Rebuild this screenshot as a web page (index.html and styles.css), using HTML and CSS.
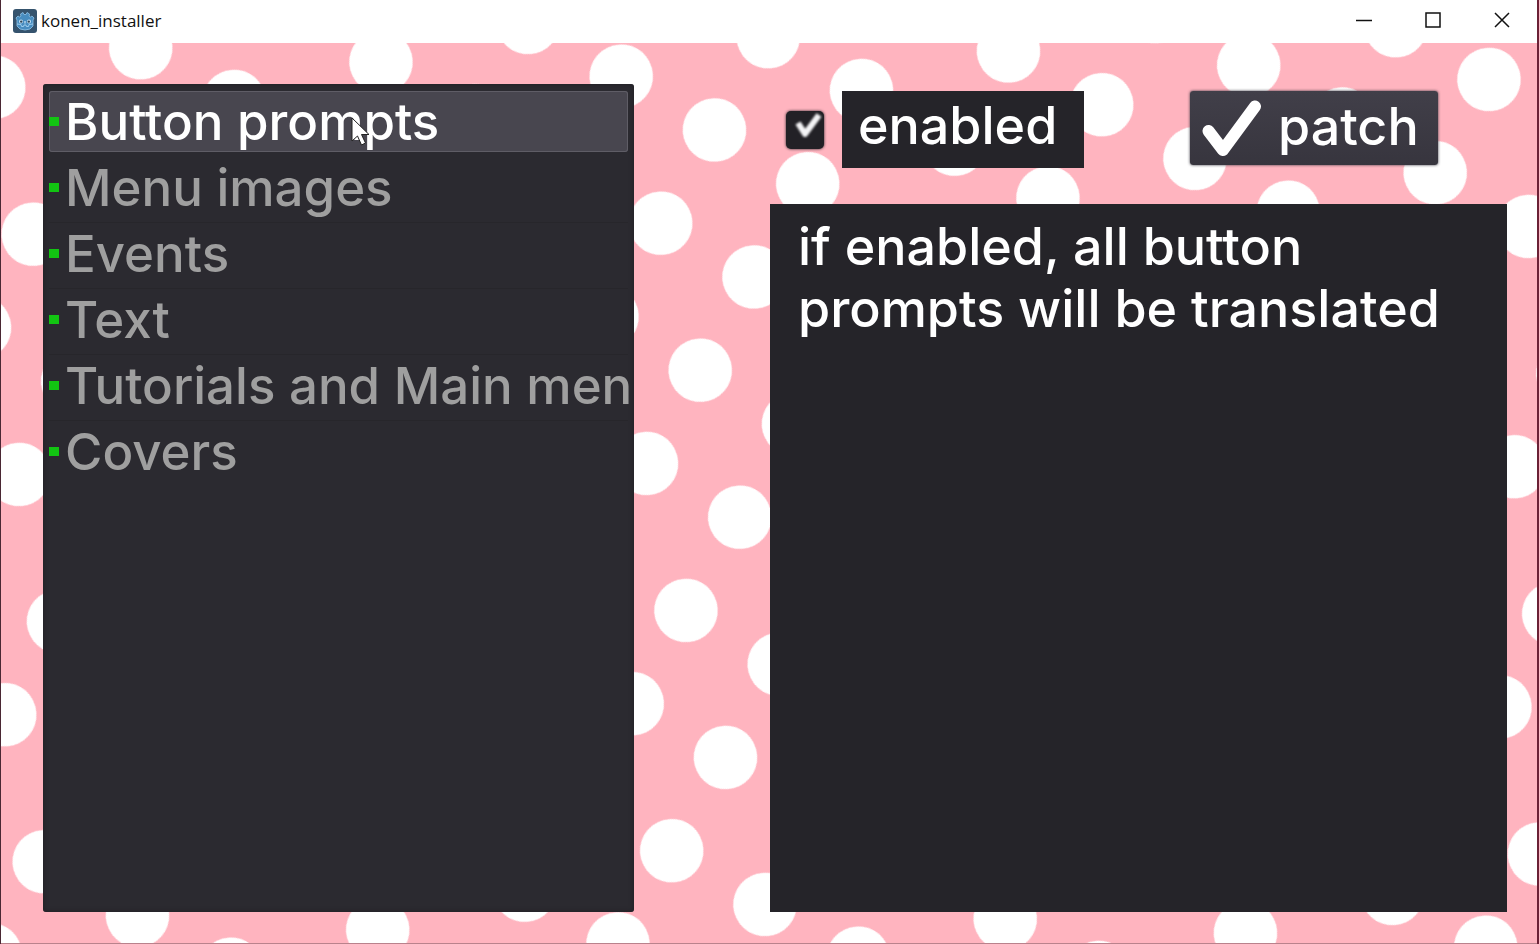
FILE: index.html
```html
<!DOCTYPE html>
<html lang="en">
<head>
<meta charset="utf-8">
<title>konen_installer</title>
<link rel="stylesheet" href="styles.css">
</head>
<body>
<div class="window">
  <header class="titlebar">
    <svg class="app-icon" viewBox="0 0 24 24" aria-hidden="true">
      <rect width="24" height="24" rx="3" fill="#35536d"/>
      <path d="M3 9 L5 7 L6.500 8 L8 7 L7.500 5 L10 3.500 L11 5.500 H13 L14 3.500 L16.500 5 L16 7 L17.500 8 L19 7 L21 9 L20 11 V17 Q18 21 12 21 Q6 21 4 17 V11 Z" fill="#478cbf" stroke="#8fc3e8" stroke-width=".8"/>
      <path d="M4 15 L8 15.500 L8.500 17.500 H10.500 L11 16 H13 L13.500 17.500 H15.500 L16 15.500 L20 15" fill="none" stroke="#a5d2f0" stroke-width=".9"/>
      <circle cx="8" cy="12.500" r="2" fill="#c9e3f5"/><circle cx="16" cy="12.500" r="2" fill="#c9e3f5"/>
      <circle cx="8.200" cy="12.600" r="1.200" fill="#2f4658"/><circle cx="15.800" cy="12.600" r="1.200" fill="#2f4658"/>
      <path d="M12 12 V14.500" stroke="#c9e3f5" stroke-width="1.200"/>
    </svg>
    <h1 class="title">konen_installer</h1>
    <div class="caption-buttons">
      <button class="caption" type="button" aria-label="Minimize"><svg viewBox="0 0 16 16"><path d="M0 8.500 H16"/></svg></button>
      <button class="caption" type="button" aria-label="Maximize"><svg viewBox="0 0 16 16"><rect x="1" y="1" width="14" height="14"/></svg></button>
      <button class="caption" type="button" aria-label="Close"><svg viewBox="0 0 16 16"><path d="M1 1 L15 15 M15 1 L1 15"/></svg></button>
    </div>
  </header>

  <main class="content">
    <svg class="dots" aria-hidden="true">
      <defs>
        <pattern id="dot" width="107.630" height="107.630" patternUnits="userSpaceOnUse" patternTransform="translate(713.500 87) rotate(29.960) translate(-53.815 -53.815)">
          <circle cx="53.815" cy="53.815" r="31.800" fill="#fff"/>
        </pattern>
      </defs>
      <rect width="100%" height="100%" fill="url(#dot)"/>
    </svg>

    <ul class="list">
      <li><button class="item selected" type="button"><span class="mark"></span>Button prompts</button></li>
      <li><button class="item" type="button"><span class="mark"></span>Menu images</button></li>
      <li><button class="item" type="button"><span class="mark"></span>Events</button></li>
      <li><button class="item" type="button"><span class="mark"></span>Text</button></li>
      <li><button class="item" type="button"><span class="mark"></span>Tutorials and Main menu</button></li>
      <li><button class="item" type="button"><span class="mark"></span>Covers</button></li>
    </ul>

    <section class="detail">
      <div class="toolbar">
        <span class="check">
          <input class="check-input" id="enabled" type="checkbox" checked>
          <svg class="check-tick" viewBox="0 0 38 38" aria-hidden="true"><path d="M12 12 L19 23 L33 4" fill="none" stroke="#f4f4f6" stroke-width="6" stroke-linejoin="round"/></svg>
        </span>
        <label class="check-label" for="enabled">enabled</label>
        <button class="patch" type="button">
          <svg class="patch-tick" viewBox="0 0 60 58" aria-hidden="true"><path d="M6.500 32 L21 51 L53 7.500" fill="none" stroke="#fff" stroke-width="12" stroke-linecap="round" stroke-linejoin="round"/></svg>
          <span class="patch-text">patch</span>
        </button>
      </div>
      <p class="description">if enabled, all button prompts will be translated</p>
    </section>
  </main>

  <svg class="cursor" viewBox="0 0 20 30" aria-hidden="true"><path d="M1 1 V24 L6.500 19 L10.500 28 L14.500 26 L10.500 17.500 H18 Z" fill="#fff" stroke="#222" stroke-width="1"/></svg>
</div>
</body>
</html>
```
FILE: styles.css
```css
* { box-sizing: border-box; }

body {
  margin: 0;
  font-family: Inter, "Open Sans", sans-serif;
  font-size: 52px;
  font-weight: 500;
  color: #fff;
}

button {
  margin: 0;
  border: 0;
  background: none;
  color: inherit;
  font: inherit;
}

.window {
  position: relative;
  display: flex;
  flex-direction: column;
  min-height: 100vh;
  border-left: 1px solid #4a2733;
  border-right: 2px solid #6b2136;
}

.titlebar {
  display: flex;
  align-items: center;
  height: 43px;
  padding: 0 1px 2px 12px;
  background: #fff;
  color: #111;
}

.app-icon { width: 24px; height: 24px; }

.title {
  flex: 1;
  margin: 0 0 0 4px;
  font: 400 17px/24px "Open Sans", "Noto Sans", sans-serif;
}

.caption-buttons {
  display: flex;
  align-self: flex-start;
}

.caption {
  display: flex;
  align-items: center;
  justify-content: center;
  width: 69px;
  height: 39px;
  padding: 0;
}

.caption svg {
  width: 16px;
  height: 16px;
  fill: none;
  stroke: #111;
  stroke-width: 1.5;
}

.content {
  position: relative;
  flex: 1;
  display: grid;
  grid-template-columns: 591fr 737fr;
  gap: 136px;
  padding: 41px 30px 31px 42px;
  background: #ffb4bf;
  border-bottom: 1px solid #b9828c;
}

.dots {
  position: absolute;
  inset: 0;
  width: 100%;
  height: 100%;
}

.list {
  position: relative;
  display: flex;
  flex-direction: column;
  min-width: 0;
  margin: 0;
  padding: 7px 6px;
  overflow: hidden;
  list-style: none;
  border-radius: 3px;
  background: #2b2a30;
  box-shadow: inset 0 0 5px #1f1e23;
  font-size: 51px;
}

.list li {
  height: 66px;
  border-bottom: 1px solid #27262b;
}

.list li:first-child,
.list li:last-child { border-color: transparent; }

.item {
  display: flex;
  align-items: center;
  gap: 6px;
  width: 100%;
  height: 61px;
  padding: 0;
  border-radius: 3px;
  color: #9f9f9f;
  white-space: nowrap;
}

.item.selected {
  background: #48464f;
  box-shadow: inset 0 0 0 1px #5f5d66;
  color: #fff;
}

.mark {
  flex: none;
  width: 10px;
  height: 9px;
  background: #12c412;
}

.detail {
  position: relative;
  display: flex;
  flex-direction: column;
  min-width: 0;
}

.toolbar {
  display: flex;
  align-items: center;
  padding: 7px 69px 36px 16px;
}

.check {
  display: grid;
  width: 38px;
  height: 38px;
  margin-right: 18px;
}

.check-input,
.check-tick { grid-area: 1 / 1; }

.check-input {
  appearance: none;
  width: 38px;
  height: 38px;
  margin: 0;
  border-radius: 5px;
  background: #222126;
  box-shadow: 0 0 3px #222126;
}

.check-tick {
  z-index: 1;
  width: 38px;
  height: 38px;
  pointer-events: none;
  filter: blur(1px);
}

.check-label {
  width: 242px;
  padding: 0 16px 8px;
  background: #252429;
  line-height: 69px;
}

.patch {
  display: flex;
  align-items: center;
  gap: 16px;
  width: 248px;
  height: 74px;
  margin: 0 0 3px auto;
  padding: 0 0 0 12px;
  border-radius: 3px;
  background: linear-gradient(#413f49, #37353e);
  box-shadow: 0 0 3px #37353e;
}

.patch-tick { width: 60px; height: 58px; }

.patch-text { padding-bottom: 4px; }

.description {
  flex: 1;
  margin: 0;
  padding: 12px 28px;
  background: #252429;
  line-height: 62px;
}

.cursor {
  position: absolute;
  left: 350px;
  top: 117px;
  width: 20px;
  height: 30px;
}
```
